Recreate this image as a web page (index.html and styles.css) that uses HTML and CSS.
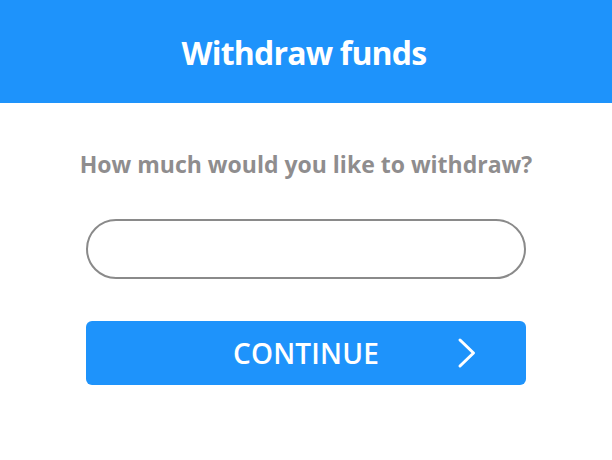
FILE: index.html
```html
<!DOCTYPE html>
<html>
<head>
<meta charset="utf-8">
<link rel="stylesheet" href="styles.css">
</head>
<body>
<header class="top-bar">
  <h1 class="title">Withdraw funds</h1>
</header>
<main class="content">
  <p class="question">How much would you like to withdraw?</p>
  <input class="amount" type="text" aria-label="Amount">
  <button class="continue" type="button">
    <span class="continue-label">CONTINUE</span>
    <svg class="chevron" width="22" height="34" viewBox="0 0 22 34" aria-hidden="true">
      <polyline points="4,4 17.5,17 4,30" fill="none" stroke="#fff" stroke-width="3" stroke-linecap="round" stroke-linejoin="round"/>
    </svg>
  </button>
</main>
</body>
</html>
```

FILE: styles.css
```css
* { box-sizing: border-box; }
html, body { margin: 0; padding: 0; background: #fff; }
body {
  width: 612px;
  height: 460px;
  font-family: "Open Sans", "Liberation Sans", sans-serif;
}
.top-bar {
  height: 103px;
  background: #1e93fb;
  display: flex;
  align-items: center;
  justify-content: center;
}
.title {
  margin: 0 4px 0 0;
  color: #fff;
  font-size: 32px;
  font-weight: 700;
  letter-spacing: -0.8px;
  line-height: 1;
  padding-top: 2px;
}
.content {
  display: flex;
  flex-direction: column;
  align-items: center;
}
.question {
  margin: 46px 0 0;
  color: #8f8d8e;
  font-size: 23px;
  font-weight: 700;
  letter-spacing: 0;
  line-height: 30px;
  white-space: nowrap;
}
.amount {
  margin-top: 40px;
  width: 440px;
  height: 60px;
  border: 2px solid #8a8a8a;
  border-radius: 30px;
  background: #fff;
  outline: none;
  font: inherit;
}
.continue {
  margin-top: 42px;
  width: 440px;
  height: 64px;
  border: 0;
  border-radius: 6px;
  background: #1e93fb;
  color: #fff;
  position: relative;
  display: flex;
  align-items: center;
  justify-content: center;
  padding: 0;
  font-family: inherit;
  cursor: pointer;
}
.continue-label {
  font-size: 28px;
  font-weight: 600;
  letter-spacing: 0.2px;
  line-height: 1;
}
.chevron {
  position: absolute;
  left: 370px;
  top: 15px;
}
```
